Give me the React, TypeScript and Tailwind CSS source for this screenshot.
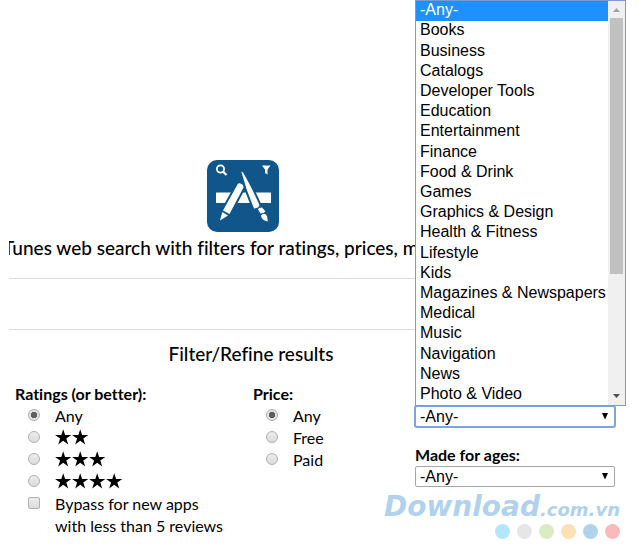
const categories = [
  "-Any-",
  "Books",
  "Business",
  "Catalogs",
  "Developer Tools",
  "Education",
  "Entertainment",
  "Finance",
  "Food & Drink",
  "Games",
  "Graphics & Design",
  "Health & Fitness",
  "Lifestyle",
  "Kids",
  "Magazines & Newspapers",
  "Medical",
  "Music",
  "Navigation",
  "News",
  "Photo & Video",
];

const dots = ["bg-[#b3e5fb]", "bg-[#e6e6e6]", "bg-[#daecc1]", "bg-[#fde1b6]", "bg-[#b0d2ec]", "bg-[#fab9bd]"];

const inputBase =
  "size-3 shrink-0 appearance-none border border-[#b0b0b0] bg-linear-to-b from-[#ececec] to-[#dcdcdc]";

export default function App() {
  return (
    <div className="relative overflow-hidden bg-white pb-4 font-['Lato',sans-serif] text-base text-black [font-variant-ligatures:none]">
      <main className="ml-[9px] pt-40">
        <header className="w-[468px]">
          <AppLogo />
          <div className="overflow-hidden">
            <h1 className="-ml-1.5 pt-1 text-[19px] leading-6 font-medium whitespace-nowrap">
              Tunes web search with filters for ratings, prices, m
            </h1>
          </div>
        </header>

        <div className="mr-[24px] mt-[18px] h-[52px] border-y border-[#dcdcdc]" />

        <h2 className="mt-3 w-[484px] text-center text-[19px] leading-6 font-medium">Filter/Refine results</h2>

        <form className="mt-[17px] flex pl-1.5">
          <fieldset className="w-[238px]">
            <legend className="text-base leading-[22px] font-bold">Ratings (or better):</legend>
            <Choice name="rating" label="Any" defaultChecked />
            <Choice name="rating" label="2 stars" stars={2} />
            <Choice name="rating" label="3 stars" stars={3} />
            <Choice name="rating" label="4 stars" stars={4} />
            <label className="flex items-start gap-[15px] pl-[13px] leading-[22px]">
              <input type="checkbox" className={`${inputBase} mt-1 rounded-xs`} />
              <span>
                Bypass for new apps
                <br />
                with less than 5 reviews
              </span>
            </label>
          </fieldset>

          <fieldset className="w-[162px]">
            <legend className="text-base leading-[22px] font-bold">Price:</legend>
            <Choice name="price" label="Any" defaultChecked />
            <Choice name="price" label="Free" />
            <Choice name="price" label="Paid" />
          </fieldset>

          <div className="flex flex-col">
            <div className="relative mt-[23px] w-[200px]">
              <CategoryMenu />
              <Dropdown id="category" label="Category" open />
            </div>
            <label htmlFor="ages" className="mt-[17px] text-base leading-[22px] font-bold">
              Made for ages:
            </label>
            <div className="relative w-[200px]">
              <Dropdown id="ages" label="Made for ages" />
            </div>
          </div>
        </form>
      </main>

      <Watermark />
    </div>
  );
}

function Choice({
  name,
  label,
  stars = 0,
  defaultChecked = false,
}: {
  name: string;
  label: string;
  stars?: number;
  defaultChecked?: boolean;
}) {
  return (
    <label className="flex h-[22px] items-center gap-[15px] pl-[13px]">
      <input
        type="radio"
        name={name}
        aria-label={label}
        defaultChecked={defaultChecked}
        className={`${inputBase} mb-0.5 rounded-full checked:bg-[radial-gradient(#606060_0_3px,#e4e4e4_3px)]`}
      />
      {stars > 0 ? (
        <span className="mb-0.5 flex">
          {Array.from({ length: stars }, (_, i) => (
            <Star key={i} />
          ))}
        </span>
      ) : (
        <span>{label}</span>
      )}
    </label>
  );
}

function Star() {
  return (
    <svg viewBox="0 0 17 16" className="h-4 w-[17px]" aria-hidden="true">
      <path d="M8.2 0.300 10.100 6H16.300L11.300 9.500 13.200 15.500 8.200 11.800 3.200 15.500 5.100 9.500 0.100 6H6.300Z" />
    </svg>
  );
}

function Dropdown({ id, label, open = false }: { id: string; label: string; open?: boolean }) {
  return (
    <>
      <select
        id={id}
        aria-label={label}
        className={`block h-[21px] w-full appearance-none rounded-xs border bg-white pl-1 font-['Liberation_Sans',sans-serif] text-base leading-[19px] outline-none ${
          open ? "border-[#7ba4e0] ring-1 ring-[#7ba4e0]" : "border-[#a6a6a6]"
        }`}
      >
        <option>-Any-</option>
      </select>
      <svg viewBox="0 0 6 7" className="pointer-events-none absolute top-[7px] right-[7px] h-[7px] w-1.5">
        <path d="M0 0H6L3 6.500Z" />
      </svg>
    </>
  );
}

// Open option list, sits right above its select
function CategoryMenu() {
  return (
    <div className="absolute bottom-full left-0 z-10 flex h-[406px] w-[211px] border border-[#7a9bd0] bg-white font-['Liberation_Sans',sans-serif] text-base">
      <ul role="listbox" aria-label="Category" className="flex flex-1 flex-col">
        {categories.map((category, i) => (
          <li
            key={category}
            role="option"
            aria-selected={i === 0}
            className="flex flex-1 items-center pb-0.5 pl-1 leading-[18px] whitespace-nowrap aria-selected:bg-[#1e90ff] aria-selected:text-white"
          >
            {category}
          </li>
        ))}
      </ul>
      <div className="flex w-[17px] flex-col items-center bg-[#f0f0f0]">
        <svg viewBox="0 0 17 17" className="size-[17px]">
          <path d="M5 11 8.500 7 12 11Z" fill="#a3a3a3" />
        </svg>
        <div className="h-64 w-[13px] bg-[#c1c1c1]" />
        <svg viewBox="0 0 17 17" className="mt-auto size-[17px]">
          <path d="M5 6 8.500 10 12 6Z" fill="#505050" />
        </svg>
      </div>
    </div>
  );
}

function AppLogo() {
  return (
    <svg viewBox="0 0 72 72" className="mx-auto size-[72px]" role="img" aria-label="App search">
      <rect width="72" height="72" rx="10" fill="#11568a" />
      <g fill="none" stroke="#fff">
        <circle cx="13.500" cy="9" r="3.600" strokeWidth="1.800" />
        <path d="M16.200 11.700 19.500 15" strokeWidth="2.200" />
      </g>
      <path d="M55 5.500H63.500L60.500 9.500V14.500L58 13V9.500Z" fill="#fff" />
      <rect x="9" y="32.500" width="55" height="10.500" rx="0.500" fill="#fff" />
      {/* the wide outline cuts the pencil and brush out of the bar */}
      <g stroke="#11568a" strokeWidth="4" fill="#fff" strokeLinejoin="round" paintOrder="stroke">
        <path d="M30.500 24.500Q31.500 22.500 33.500 23.500L36 25Q37 26 36.500 27.500L22.500 54 16 50.500Z" />
        <path d="M34.300 11.500 36 12.500Q43.500 25 52.500 45Q52 48 47 48.500Q39 30 34.300 11.500Z" />
      </g>
      <g fill="#fff">
        <path d="M15.300 52 21 55.500 13 60.500Z" />
        <path d="M51 49.500Q51.500 47.500 55 47.500L58.500 51.500Q56.500 53.500 53.500 53.500Z" />
        <path d="M54 55.500Q56 52.500 59 54.500C61 57 60 58.500 61 61.500Q54.500 60.500 54 55.500Z" />
      </g>
    </svg>
  );
}

function Watermark() {
  return (
    <footer className="absolute right-[19px] bottom-3.5 flex flex-col items-end">
      <p className="font-['DejaVu_Sans',sans-serif] text-[28px] leading-7 font-bold text-[#b0d2ec] italic">
        Download<span className="text-lg">.com.vn</span>
      </p>
      <div className="flex gap-[7px]">
        {dots.map((dot) => (
          <span key={dot} className={`size-[15px] rounded-full ${dot}`} />
        ))}
      </div>
    </footer>
  );
}
